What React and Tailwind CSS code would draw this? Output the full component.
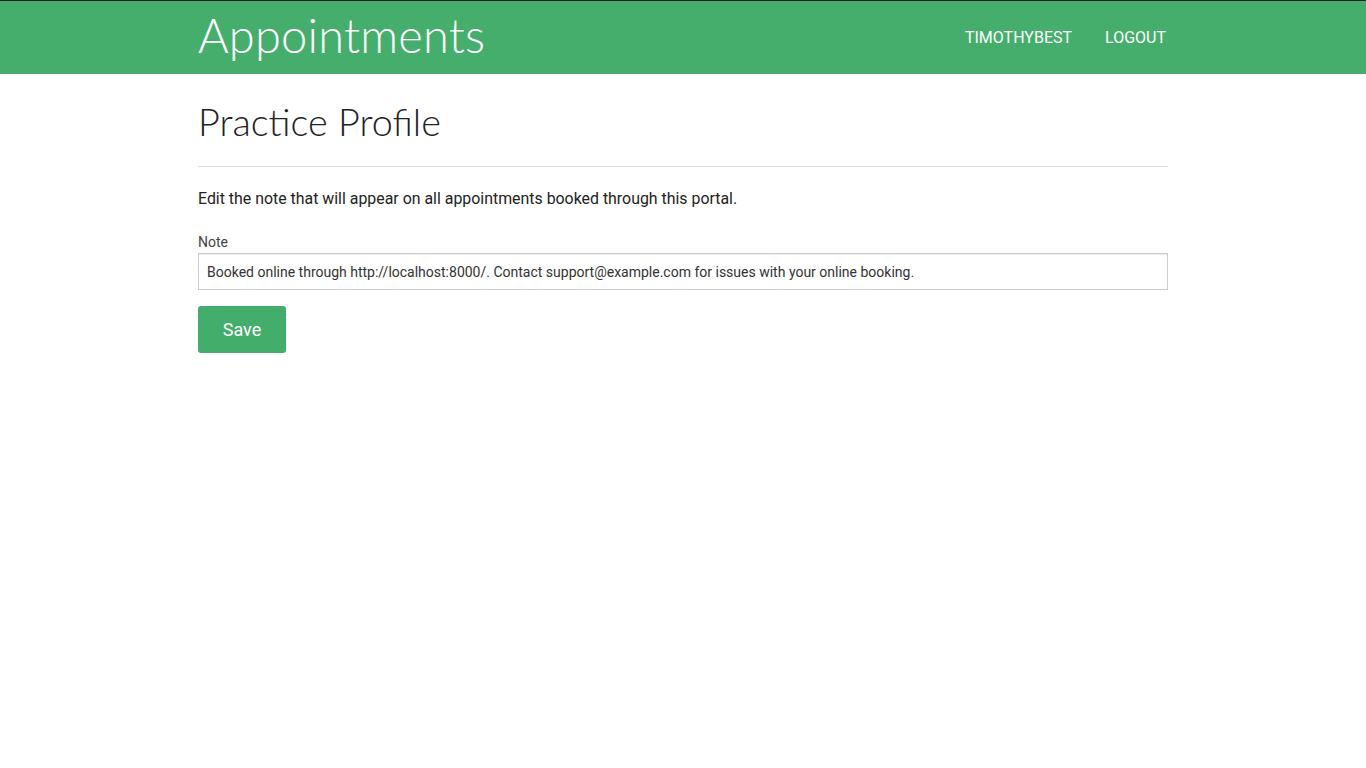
export default function App() {
  return (
    <div className="min-h-screen bg-white font-['Roboto',sans-serif] text-[#222]">
      {/* Top bar */}
      <header className="h-[74px] border-t border-[#222] bg-[#46ae6c]">
        <div className="mx-auto flex h-full w-[970px] items-center justify-between">
          <h1 className="pb-1 font-['Lato',sans-serif] text-[47px] font-light leading-none tracking-[0.2px] text-white">
            Appointments
          </h1>
          <nav className="mr-[2px] flex items-center gap-[33px] text-[16px] uppercase text-white">
            <a href="#">TimothyBest</a>
            <a href="#">Logout</a>
          </nav>
        </div>
      </header>

      {/* Page content */}
      <main className="mx-auto w-[970px]">
        <h2 className="mt-[26px] font-['Lato',sans-serif] text-[37.8px] font-light leading-[44px] text-[#222]">
          Practice Profile
        </h2>
        <hr className="mt-[22px] border-[#ddd]" />
        <p className="mt-[21px] text-[15.9px] leading-[22px] text-[#222]">
          Edit the note that will appear on all appointments booked through this portal.
        </p>

        <form className="mt-[23px]">
          <label className="block text-[14px] leading-[19px] text-[#444]">Note</label>
          <input
            type="text"
            defaultValue="Booked online through http://localhost:8000/. Contact support@example.com for issues with your online booking."
            className="mt-[1px] block h-[37px] w-full border border-[#ccc] px-2 text-[14px] text-[#333] shadow-[inset_0_1px_1px_rgba(0,0,0,0.075)] outline-none"
          />
          <button
            type="button"
            className="mt-4 h-[47px] w-[88px] rounded-[3px] bg-[#43ad6b] text-[18px] text-white"
          >
            Save
          </button>
        </form>
      </main>
    </div>
  )
}
